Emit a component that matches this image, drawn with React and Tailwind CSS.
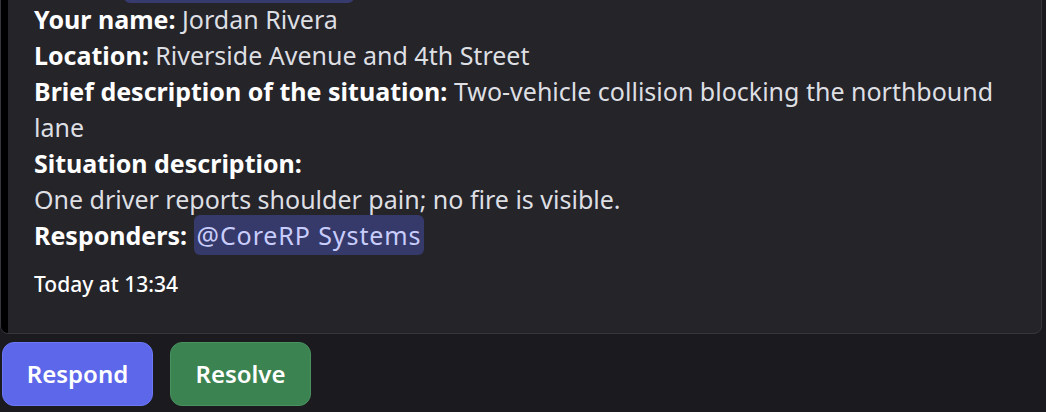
export default function App() {
  return (
    <div className="h-[412px] w-[1046px] overflow-hidden bg-[#1b1b1f] font-['Noto_Sans',sans-serif] text-[#dedfe3]">
      <div className="flex flex-col">
        {/* incident embed */}
        <div className="mr-[4px] -mt-[8px] flex overflow-hidden rounded-[8px] border border-[#36363c] bg-[#242429]">
          <div className="w-[7px] shrink-0 bg-black" />
          <div className="flex flex-col pb-[35px] pl-[26px] pr-[32px] text-[25px] leading-[36px]">
            {/* tail of the mention pill from the line above */}
            <div className="h-[8px]">
              <div className="ml-[90px] mt-[-2px] h-[12px] w-[230px] rounded-b-[6px] bg-[#373a6c]" />
            </div>
            <div>
              <span className="font-bold text-white">Your name:</span> Jordan Rivera
            </div>
            <div>
              <span className="font-bold text-white">Location:</span> Riverside Avenue and 4th Street
            </div>
            <div>
              <span className="font-bold text-white">Brief description of the situation:</span>{' '}
              <span>Two-vehicle collision blocking the northbound lane</span>
            </div>
            <div className="font-bold text-white">Situation description:</div>
            <div>One driver reports shoulder pain; no fire is visible.</div>
            <div>
              <span className="font-bold text-white">Responders: </span>
              <span className="rounded-[6px] bg-[#353a6b] px-[3px] py-[3px] tracking-[0.9px] text-[#c9cdfb]">@CoreRP Systems</span>
            </div>
            <div className="mt-[17px] text-[21px] font-medium leading-[28px] text-white">Today at 13:34</div>
          </div>
        </div>

        <div className="mt-[8px] flex gap-[17px] pl-[2px]">
          <button className="h-[64px] w-[151px] rounded-[12px] border border-[#6c78f5] bg-[#5c67ea] text-[24px] font-semibold text-white">
            Respond
          </button>
          <button className="h-[64px] w-[141px] rounded-[12px] border border-[#4a9160] bg-[#3b8350] text-[24px] font-semibold text-white">
            Resolve
          </button>
        </div>
      </div>
    </div>
  );
}
